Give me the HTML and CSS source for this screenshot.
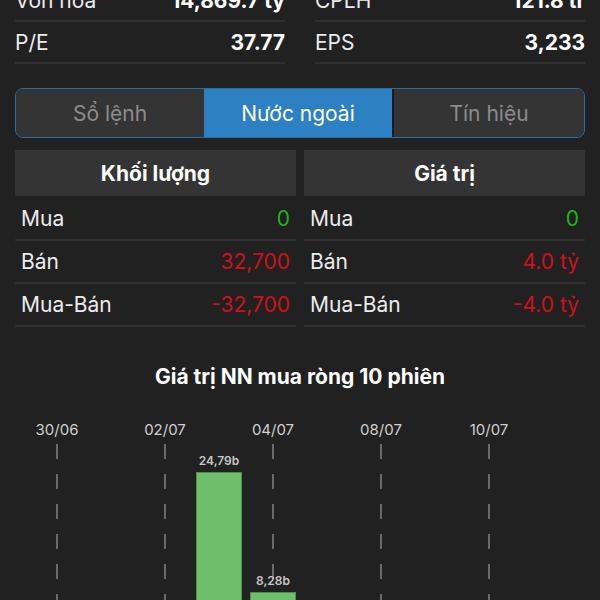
FILE: index.html
```html
<!DOCTYPE html>
<html lang="vi">
<head>
    <meta charset="UTF-8">
    <meta name="viewport" content="width=device-width, initial-scale=1.0">
    <title>Nước ngoài</title>
    <link rel="stylesheet" href="styles.css">
</head>
<body>
    <main class="page">
        <!-- chỉ số cơ bản -->
        <div class="stats">
            <div class="stat-col">
                <div class="stat-row"><span>Vốn hóa</span><b>14,869.7 tỷ</b></div>
                <div class="stat-row"><span>P/E</span><b>37.77</b></div>
            </div>
            <div class="stat-col">
                <div class="stat-row"><span>CPLH</span><b>121.8 tr</b></div>
                <div class="stat-row"><span>EPS</span><b>3,233</b></div>
            </div>
        </div>

        <div class="tabs">
            <button class="tab">Sổ lệnh</button>
            <button class="tab active">Nước ngoài</button>
            <button class="tab">Tín hiệu</button>
        </div>

        <div class="tables">
            <div class="table">
                <div class="table-head">Khối lượng</div>
                <div class="row"><span>Mua</span><span class="up">0</span></div>
                <div class="row"><span>Bán</span><span class="down">32,700</span></div>
                <div class="row"><span>Mua-Bán</span><span class="down">-32,700</span></div>
            </div>
            <div class="table">
                <div class="table-head">Giá trị</div>
                <div class="row"><span>Mua</span><span class="up">0</span></div>
                <div class="row"><span>Bán</span><span class="down">4.0 tỷ</span></div>
                <div class="row"><span>Mua-Bán</span><span class="down">-4.0 tỷ</span></div>
            </div>
        </div>

        <h2 class="chart-title">Giá trị NN mua ròng 10 phiên</h2>

        <!-- biểu đồ 10 phiên -->
        <div class="chart">
            <div class="col grid"><div class="date">30/06</div><div class="plot"></div></div>
            <div class="col"><div class="date"></div><div class="plot"></div></div>
            <div class="col grid"><div class="date">02/07</div><div class="plot"></div></div>
            <div class="col">
                <div class="date"></div>
                <div class="plot">
                    <div class="bar-label">24,79b</div>
                    <div class="bar" style="height: 180px"></div>
                </div>
            </div>
            <div class="col grid">
                <div class="date">04/07</div>
                <div class="plot">
                    <div class="bar-label">8,28b</div>
                    <div class="bar" style="height: 60px"></div>
                </div>
            </div>
            <div class="col"><div class="date"></div><div class="plot"></div></div>
            <div class="col grid"><div class="date">08/07</div><div class="plot"></div></div>
            <div class="col"><div class="date"></div><div class="plot"></div></div>
            <div class="col grid"><div class="date">10/07</div><div class="plot"></div></div>
            <div class="col"><div class="date"></div><div class="plot"></div></div>
        </div>
    </main>
</body>
</html>
```

FILE: styles.css
```css
* {
    margin: 0;
    padding: 0;
    box-sizing: border-box;
}
body {
    background: #212121;
    color: #ececec;
    font-family: Inter, "Liberation Sans", sans-serif;
    overflow: hidden;
}
.page {
    padding: 0 15px;
}

/* chỉ số */
.stats {
    display: grid;
    grid-template-columns: 1fr 1fr;
    column-gap: 30px;
    margin-top: -20px;
}
.stat-row {
    height: 42px;
    display: flex;
    align-items: center;
    justify-content: space-between;
    border-bottom: 2px solid #303030;
    font-size: 21px;
}
.stat-row b {
    color: #fff;
    font-weight: 700;
}

/* tabs */
.tabs {
    margin-top: 24px;
    height: 50px;
    display: grid;
    grid-template-columns: 188px 188px 1fr;
    border: 1.5px solid #2a6ea6;
    border-radius: 8px;
    overflow: hidden;
}
.tab {
    border: none;
    background: #343434;
    color: #8c8c8c;
    font-family: inherit;
    font-size: 21px;
}
.tab.active {
    background: #2d80c1;
    color: #fff;
}
.tab:last-child {
    border-left: 2px solid #1d1d1d;
}

/* bảng */
.tables {
    margin-top: 12px;
    display: grid;
    grid-template-columns: 1fr 1fr;
    column-gap: 8px;
}
.table-head {
    height: 46px;
    background: #343434;
    display: flex;
    align-items: center;
    justify-content: center;
    font-size: 21px;
    font-weight: 700;
    color: #fff;
    margin-bottom: 2px;
}
.row {
    height: 43px;
    padding: 0 6px;
    display: flex;
    align-items: center;
    justify-content: space-between;
    border-bottom: 2px solid #303030;
    font-size: 21px;
}
.up {
    color: #1fb41f;
}
.down {
    color: #d0101a;
}

/* biểu đồ */
.chart-title {
    margin-top: 37px;
    text-align: center;
    font-size: 21px;
    line-height: 26px;
    font-weight: 700;
    color: #fff;
}
.chart {
    margin: 30px 15px 0;
    display: flex;
}
.col {
    width: 54px;
    display: flex;
    flex-direction: column;
    align-items: center;
}
.date {
    height: 20px;
    line-height: 20px;
    font-size: 15px;
    color: #d0d0d0;
    margin-bottom: 4px;
}
.plot {
    width: 100%;
    height: 208px;
    display: flex;
    flex-direction: column;
    justify-content: flex-end;
    align-items: center;
}
.grid .plot {
    background-image: linear-gradient(to bottom, #6a6a6a 50%, transparent 50%);
    background-size: 2px 30px;
    background-position: center top;
    background-repeat: repeat-y;
}
.bar-label {
    font-size: 12px;
    font-weight: 600;
    color: #c8c8c8;
    line-height: 14px;
    margin-bottom: 4px;
}
.bar {
    width: 46px;
    background: #70bf6c;
    border: 1px solid #4a9446;
    border-bottom: none;
}
```
